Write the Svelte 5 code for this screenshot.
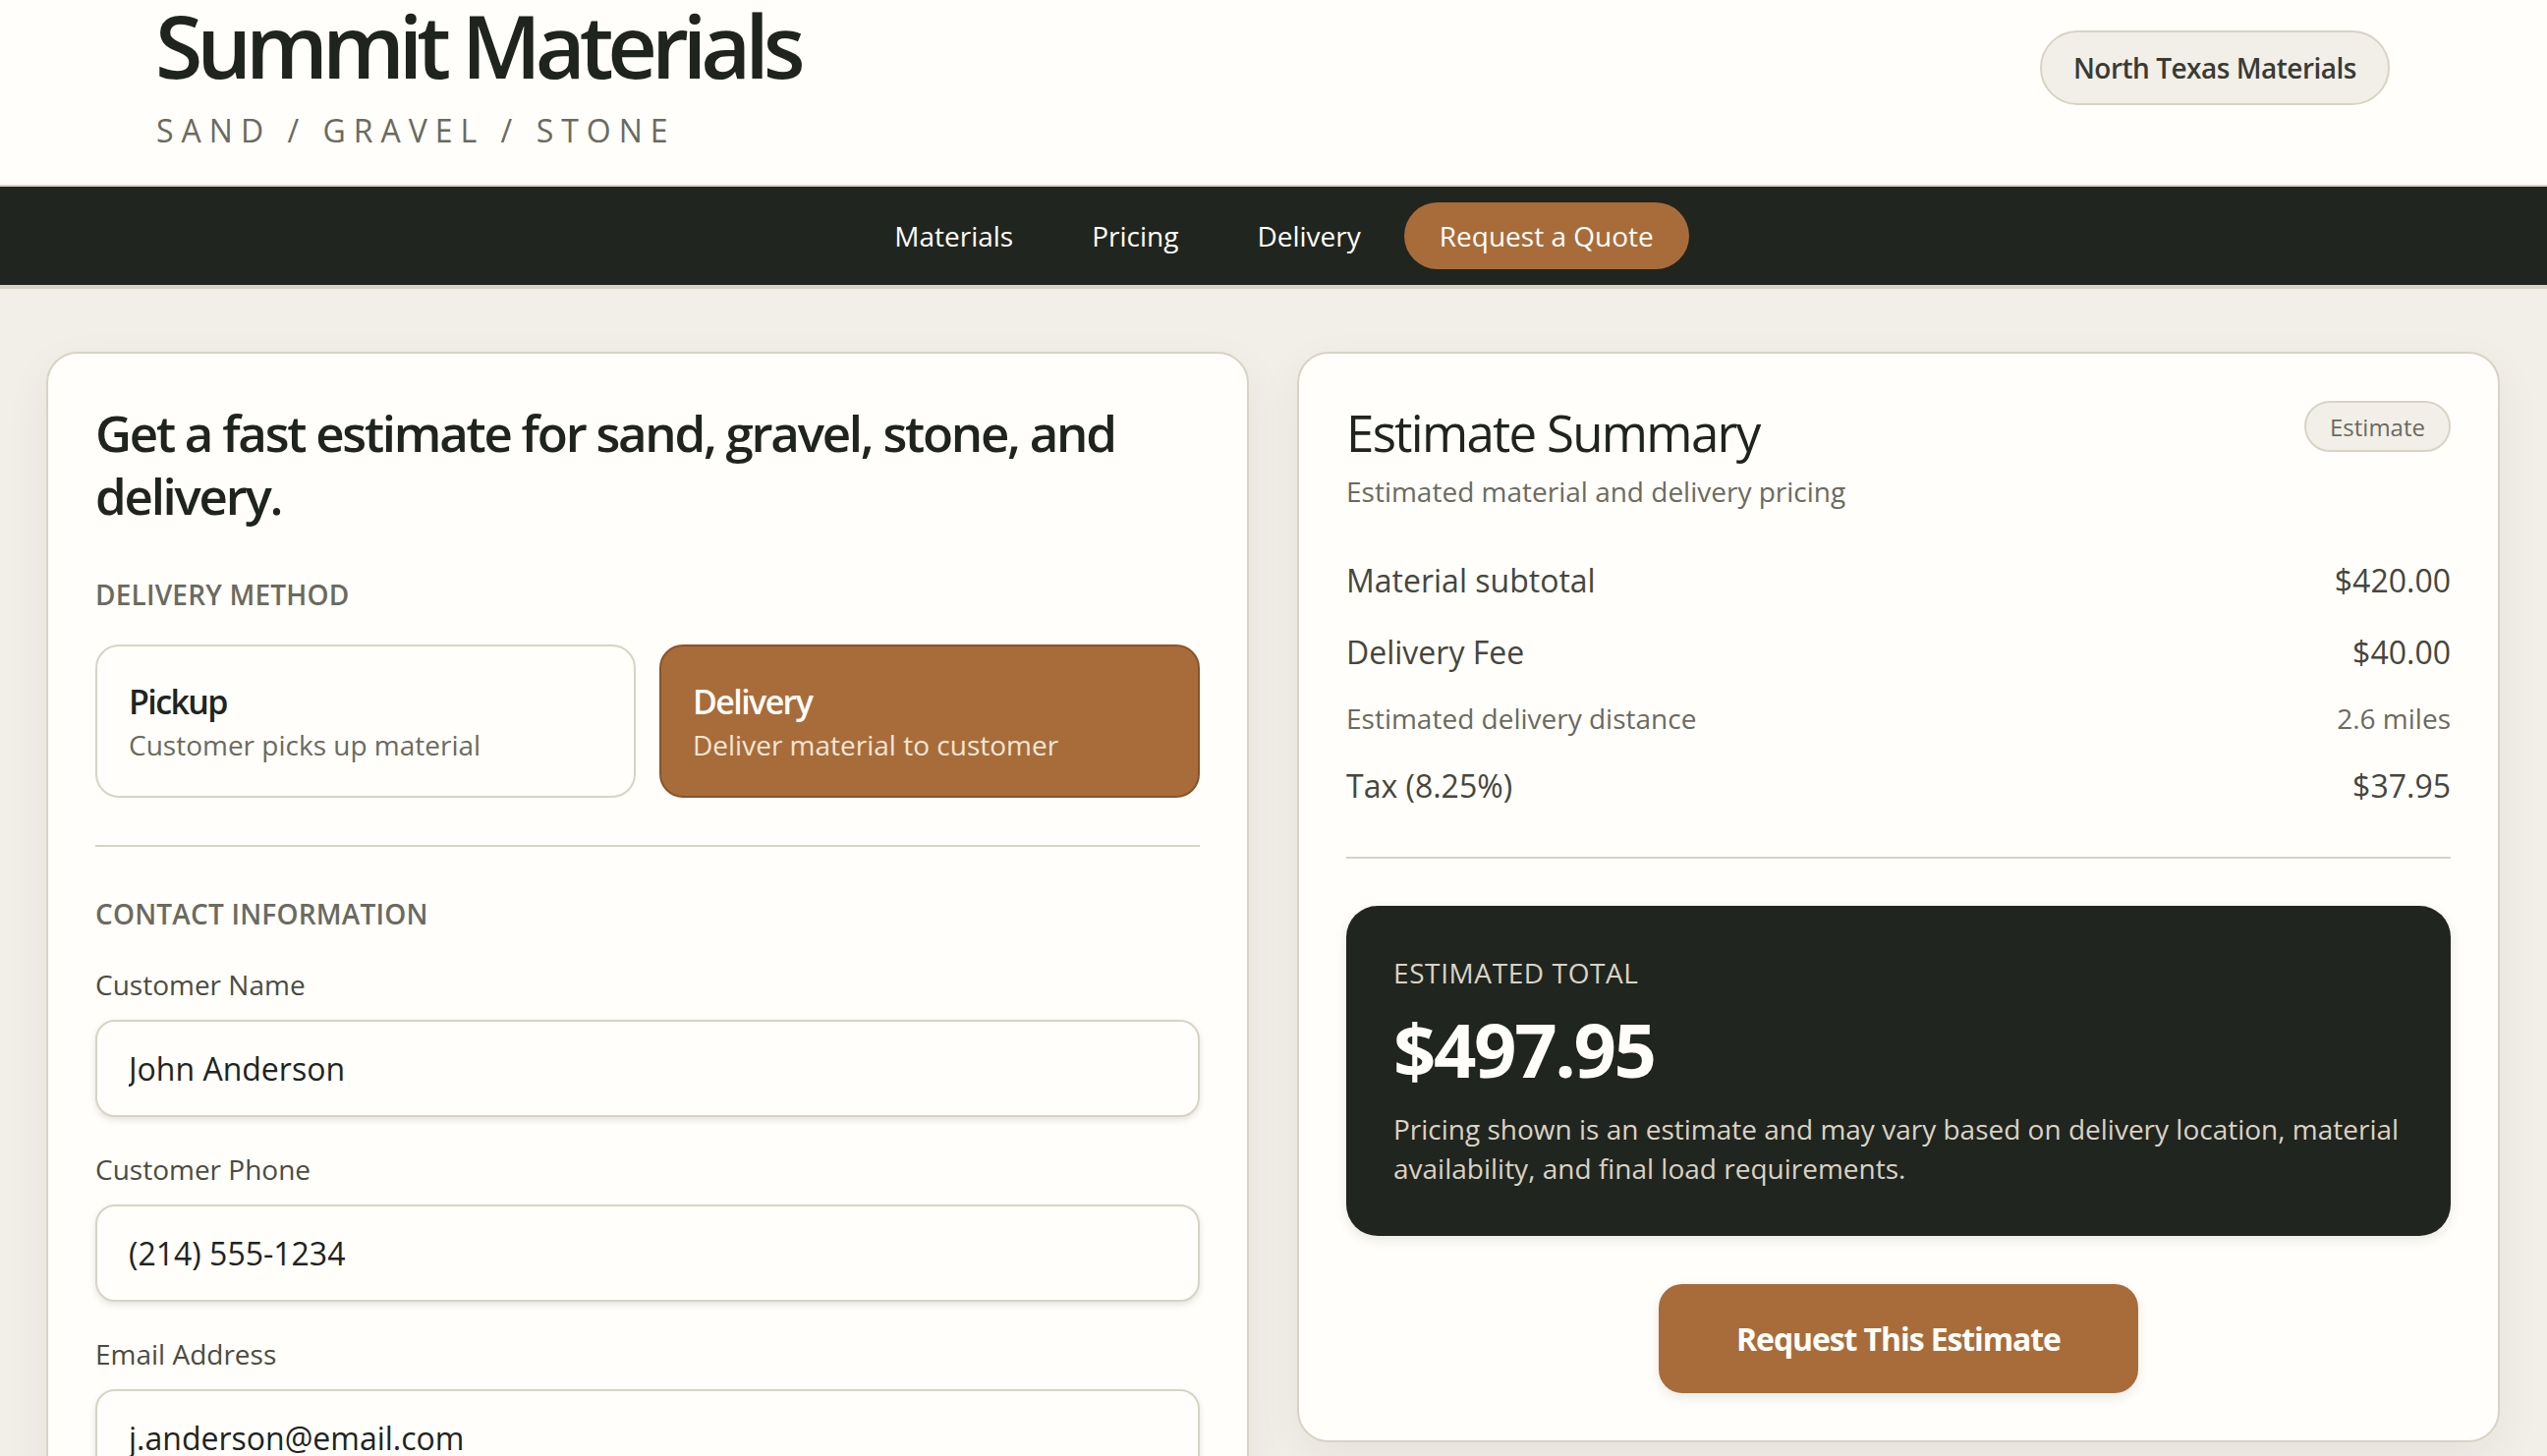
<script>
  let name = $state('John Anderson');
  let phone = $state('(214) 555-1234');
  let email = $state('j.anderson@email.com');
  let method = $state('delivery');

  const methods = [
    { id: 'pickup', title: 'Pickup', note: 'Customer picks up material' },
    { id: 'delivery', title: 'Delivery', note: 'Deliver material to customer' }
  ];
  const rows = [
    { label: 'Material subtotal', value: '$420.00' },
    { label: 'Delivery Fee', value: '$40.00' },
    { label: 'Estimated delivery distance', value: '2.6 miles', small: true },
    { label: 'Tax (8.25%)', value: '$37.95' }
  ];
</script>

<header class="top">
  <div class="brand">
    <h1>Summit Materials</h1>
    <p class="tag">SAND / GRAVEL / STONE</p>
  </div>
  <span class="region">North Texas Materials</span>
</header>

<nav class="nav">
  <a href="#materials">Materials</a>
  <a href="#pricing">Pricing</a>
  <a href="#delivery">Delivery</a>
  <a class="cta" href="#quote">Request a Quote</a>
</nav>

<main class="page">
  <section class="card">
    <h2 class="lead">Get a fast estimate for sand, gravel, stone, and delivery.</h2>

    <h3 class="label">DELIVERY METHOD</h3>
    <div class="methods">
      {#each methods as m}
        <button class="method" class:on={method === m.id} onclick={() => (method = m.id)}>
          <strong>{m.title}</strong>
          <span>{m.note}</span>
        </button>
      {/each}
    </div>

    <hr />

    <h3 class="label contact">CONTACT INFORMATION</h3>
    <label class="field">
      <span>Customer Name</span>
      <input bind:value={name} />
    </label>
    <label class="field">
      <span>Customer Phone</span>
      <input bind:value={phone} />
    </label>
    <label class="field">
      <span>Email Address</span>
      <input bind:value={email} />
    </label>
  </section>

  <section class="card">
    <div class="sum-head">
      <div>
        <h2 class="sum-title">Estimate Summary</h2>
        <p class="sub">Estimated material and delivery pricing</p>
      </div>
      <span class="badge">Estimate</span>
    </div>

    <div class="rows">
      {#each rows as r}
        <div class="row" class:small={r.small}>
          <span>{r.label}</span>
          <span>{r.value}</span>
        </div>
      {/each}
    </div>

    <hr class="sum-line" />

    <div class="total">
      <div class="total-label">ESTIMATED TOTAL</div>
      <div class="amount">$497.95</div>
      <p>Pricing shown is an estimate and may vary based on delivery location, material availability, and final load requirements.</p>
    </div>

    <div class="actions">
      <button class="request">Request This Estimate</button>
    </div>
  </section>
</main>

<style>
  :global(html), :global(body) { height: 1482px; overflow: hidden; }
  :global(body) {
    margin: 0;
    background: #f2efe8;
    color: #20241f;
    font-family: "Open Sans", "Liberation Sans", sans-serif;
  }

  .top {
    height: 188px;
    box-sizing: border-box;
    padding: 0 160px 0 159px;
    display: flex;
    justify-content: space-between;
    align-items: flex-start;
    background: #fffefa;
  }
  h1 { margin: 0 0 0 -1px; font-size: 88px; line-height: 92px; font-weight: 600; letter-spacing: -6.1px; }
  .tag { margin: 21px 0 0; font-size: 32px; line-height: 40px; letter-spacing: 8px; color: #6b6a5f; }
  .region {
    margin-top: 31px;
    height: 76px;
    box-sizing: border-box;
    padding: 0 32px;
    display: flex;
    align-items: center;
    border: 2px solid #d9d3c5;
    border-radius: 40px;
    background: #f2efe8;
    font-size: 28px;
    font-weight: 600;
    letter-spacing: -0.5px;
    color: #3a3b33;
  }

  .nav {
    height: 106px;
    box-sizing: border-box;
    border-top: 2px solid #d9d3c5;
    border-bottom: 4px solid #d9d3c5;
    background: #21251f;
    display: flex;
    justify-content: center;
    align-items: center;
    gap: 6px;
  }
  .nav a { color: #fffefa; font-size: 28px; text-decoration: none; padding: 0 37px; }
  .nav a.cta {
    margin-left: 1px;
    height: 68px;
    box-sizing: border-box;
    padding: 0 36px;
    display: flex;
    align-items: center;
    border-radius: 34px;
    background: #a86c3b;
  }

  .page {
    padding: 64px 48px 64px 47px;
    display: grid;
    grid-template-columns: 1fr 1fr;
    gap: 49px;
    align-items: start;
  }
  .card {
    box-sizing: border-box;
    padding: 48px;
    border: 2px solid #d9d3c5;
    border-radius: 32px;
    background: #fffefa;
    box-shadow: 0 16px 48px rgba(32, 36, 31, 0.06);
  }
  h2 { margin: 0; font-size: 51px; line-height: 64px; font-weight: 600; letter-spacing: -2.25px; }
  .sum-title { font-weight: 500; letter-spacing: -1.7px; }

  .label { margin: 0; font-size: 28px; line-height: 40px; font-weight: 600; letter-spacing: 0.2px; color: #6b6a5f; }
  .lead + .label { margin-top: 49px; }
  .methods { margin-top: 31px; display: grid; grid-template-columns: 1fr 1fr; gap: 24px; }
  .method {
    height: 156px;
    box-sizing: border-box;
    padding: 0 32px;
    display: flex;
    flex-direction: column;
    justify-content: center;
    align-items: flex-start;
    border: 2px solid #d9d3c5;
    border-radius: 24px;
    background: #fffefa;
    color: #20241f;
    font: inherit;
    text-align: left;
  }
  .method strong { font-size: 34px; line-height: 46px; font-weight: 600; letter-spacing: -1.6px; }
  .method span { margin-top: 1px; font-size: 28px; line-height: 40px; color: #6b6a5f; }
  .method.on { background: #a86c3b; border-color: #8a5428; color: #fffefa; }
  .method.on span { color: #f1e6d6; }

  hr { margin: 48px 0 0; border: 0; border-top: 2px solid #d9d3c5; }
  .contact { margin-top: 48px; }

  .field { display: block; margin-top: 33px; }
  .field span { display: block; font-size: 28px; line-height: 40px; color: #4b4c42; }
  .contact + .field { margin-top: 32px; }
  .field input {
    display: block;
    margin-top: 16px;
    width: 100%;
    height: 99px;
    box-sizing: border-box;
    padding: 0 32px;
    border: 2px solid #d9d3c5;
    border-radius: 20px;
    background: #fffefa;
    color: #20241f;
    font: inherit;
    font-size: 32px;
    box-shadow: 0 3px 6px rgba(32, 36, 31, 0.12);
    outline: none;
  }

  .sum-head { display: flex; justify-content: space-between; align-items: flex-start; }
  .sub { margin: 8px 0 0; font-size: 28px; line-height: 40px; color: #6b6a5f; }
  .badge {
    height: 52px;
    box-sizing: border-box;
    padding: 0 24px;
    display: flex;
    align-items: center;
    border: 2px solid #d9d3c5;
    border-radius: 26px;
    background: #f2efe8;
    font-size: 24px;
    color: #6b6a5f;
  }

  .rows { margin-top: 48px; display: flex; flex-direction: column; gap: 28px; }
  .row { display: flex; justify-content: space-between; font-size: 32px; line-height: 45px; color: #46463d; }
  .row.small { font-size: 28px; line-height: 35px; color: #6b6a5f; }
  .sum-line { margin: 50px 0 0; }

  .total {
    margin-top: 48px;
    padding: 48px 48px 49px;
    border-radius: 32px;
    background: #21251f;
    color: #fffefa;
    box-shadow: 0 4px 12px rgba(32, 36, 31, 0.1);
  }
  .total-label { font-size: 28px; line-height: 40px; letter-spacing: 0.6px; color: #d9d3c5; }
  .amount { margin-top: 10px; font-size: 76px; line-height: 96px; font-weight: 700; letter-spacing: -2.4px; }
  .total p { margin: 13px 0 0; font-size: 28px; line-height: 40px; color: #d9d3c5; }

  .actions { margin-top: 49px; display: flex; justify-content: center; }
  .request {
    height: 111px;
    box-sizing: border-box;
    padding: 0 79px;
    border: 0;
    border-radius: 24px;
    background: #a86c3b;
    color: #fffefa;
    font: inherit;
    font-size: 32px;
    font-weight: 700;
    letter-spacing: -1.1px;
    box-shadow: 0 4px 12px rgba(32, 36, 31, 0.1);
  }
</style>
